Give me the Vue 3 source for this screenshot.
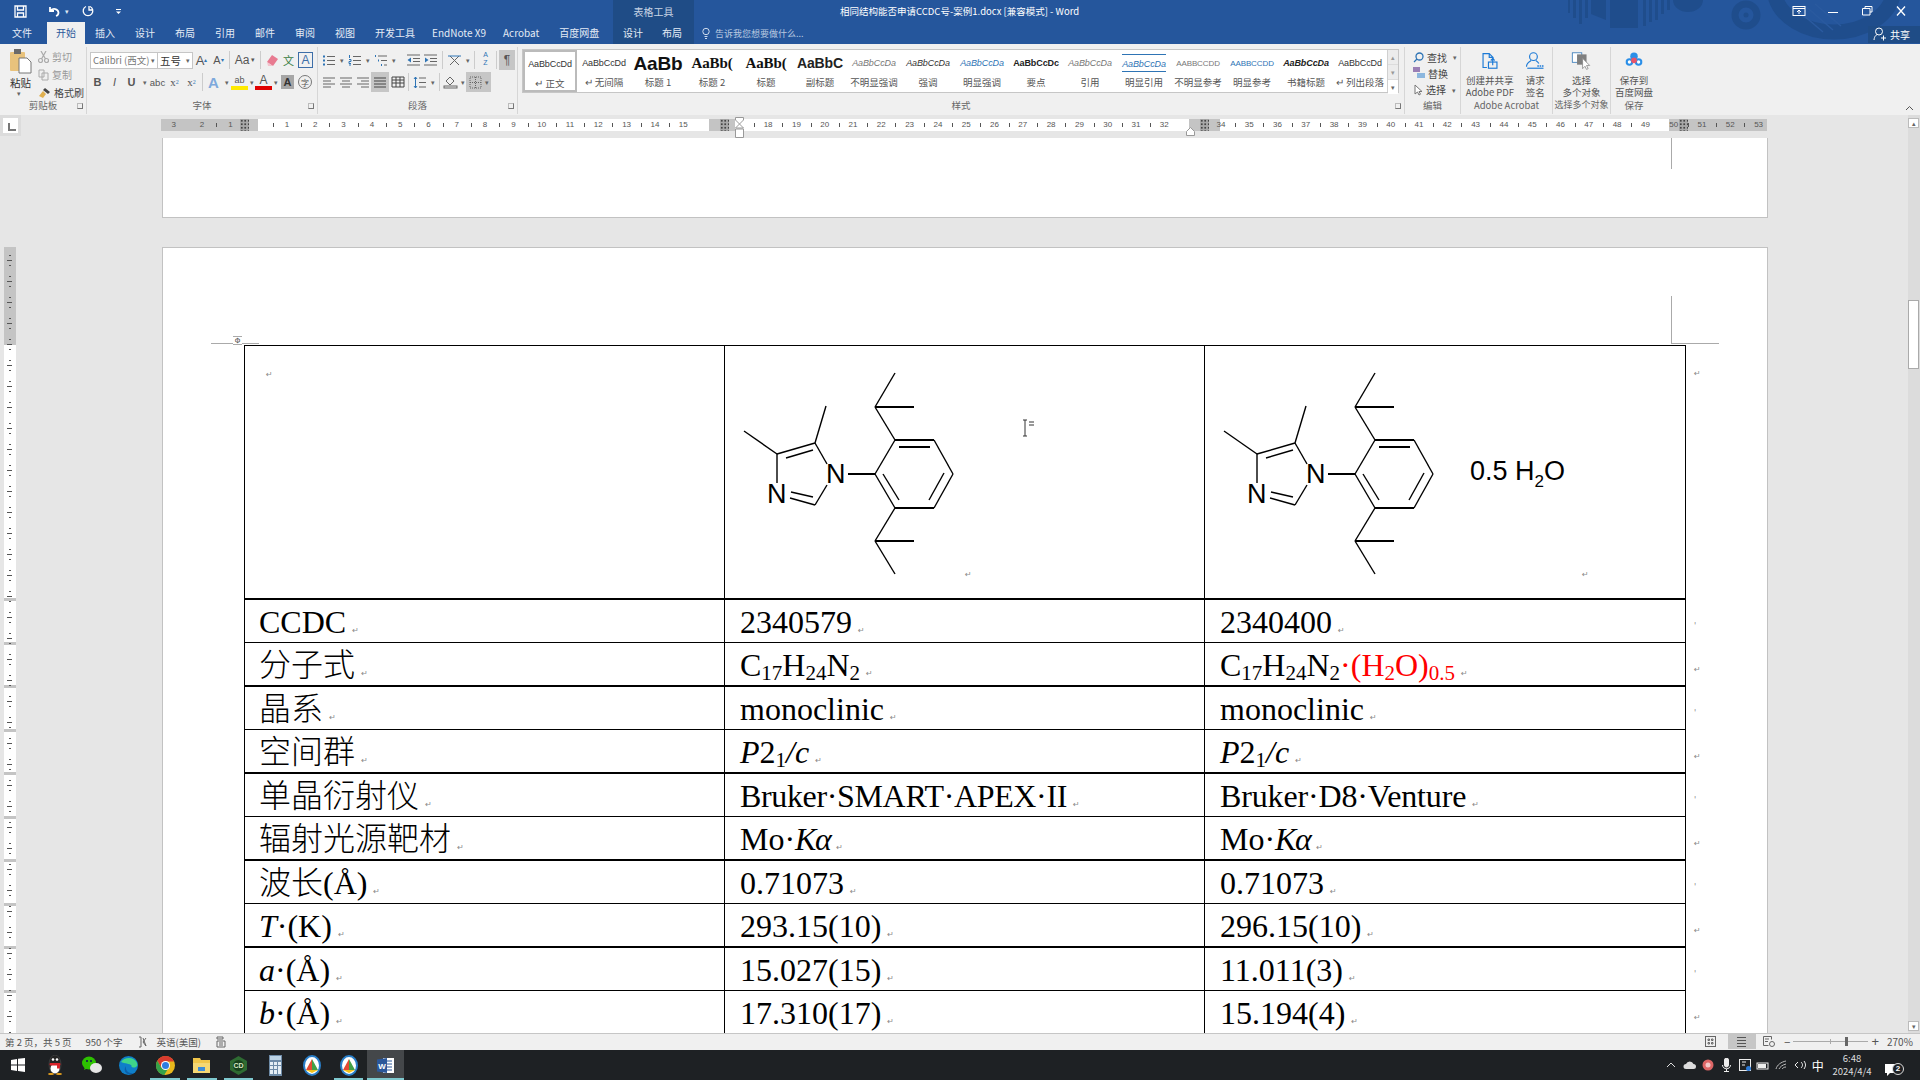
<template>
  <div class="word">
    <!-- title bar + tabs -->
    <header class="top">
      <svg class="deco" viewBox="0 0 340 44" width="340" height="44">
        <g fill="#1f4d8c">
          <rect v-for="s in decoStripes" :key="s[0]" :x="s[0]" y="0" :width="s[1]" :height="s[2]" />
          <path d="M28 0h15v20l-15-6zM47 0h28v28H47zM110 0h30a15 12 0 0 1-30 0z" />
        </g>
        <circle cx="183" cy="15" r="11" fill="none" stroke="#1f4d8c" stroke-width="7" />
        <circle cx="183" cy="15" r="2.5" fill="#1f4d8c" />
        <path d="M212 -4a60 44 0 0 0 118 0" fill="none" stroke="#1f4d8c" stroke-width="15" />
        <path d="M232 8l28 24M240 4l30 26M252 4l26 22" stroke="#2a5a9f" stroke-width="1.5" />
      </svg>

      <div class="top-left">
        <div class="qat">
          <svg class="q-save" width="13" height="13" viewBox="0 0 13 13" fill="none" stroke="#fff" stroke-width="1.3"><path d="M1 1h11v11H1zM3.5 1v4h6V1M3.5 12V8h6v4" /></svg>
          <svg class="q-undo" width="14" height="13" viewBox="0 0 14 13" fill="none" stroke="#fff" stroke-width="1.8"><path d="M3 2v4h4M3.5 5.5C6 3 11 3.500 11.500 7.500 11.500 9 10.500 10.500 9 11" /></svg>
          <span class="q-car">▾</span>
          <svg class="q-redo" width="13" height="13" viewBox="0 0 13 13" fill="none" stroke="#fff" stroke-width="1.3"><path d="M8 1.500a4.800 4.800 0 1 1-4 0M7 1v4h3" /></svg>
          <svg class="q-more" width="7" height="7" viewBox="0 0 7 7" fill="#fff"><rect x="1" y="1" width="5" height="1" /><path d="M1 3.500h5L3.500 6z" /></svg>
        </div>
        <nav class="tabs">
          <span v-for="t in tabs" :key="t" class="tab" :class="{ on: t === '开始', file: t === '文件', endnote: t === 'EndNote X9' }">{{ t }}</span>
        </nav>
      </div>

      <div class="top-ctx">
        <div class="ctx-title">表格工具</div>
        <nav class="tabs"><span class="tab ctx">设计</span><span class="tab ctx">布局</span></nav>
      </div>

      <div class="top-right">
        <div class="title-row">
          <span class="doc-title">相同结构能否申请CCDC号-案例1.docx [兼容模式] - Word</span>
          <div class="winbtns">
            <svg width="14" height="12" viewBox="0 0 14 12" fill="none" stroke="#fff"><rect x="1" y="1.500" width="12" height="9" /><path d="M1 3.500h12M7 9V5.500M5 7l2-2 2 2" /></svg>
            <svg width="14" height="12" viewBox="0 0 14 12" stroke="#fff"><path d="M2 7.500h10" /></svg>
            <svg width="14" height="12" viewBox="0 0 14 12" fill="none" stroke="#fff"><path d="M5 3V1.500h7V7h-2M2.500 3.500h7.500v6.500H2.500z" /></svg>
            <svg width="14" height="12" viewBox="0 0 14 12" stroke="#fff" stroke-width="1.300"><path d="M3 1.500l8 9M11 1.500l-8 9" /></svg>
          </div>
        </div>
        <div class="search-row">
          <svg width="8" height="13" viewBox="0 0 8 13" fill="none" stroke="#cfdcee"><circle cx="4" cy="4.500" r="3.200" /><path d="M2.500 9.500h3M3 11.500h2" /></svg>
          <span class="tell">告诉我您想要做什么...</span>
          <div class="share">
            <svg width="14" height="14" viewBox="0 0 14 14" fill="none" stroke="#fff"><circle cx="6" cy="4.500" r="3.500" /><path d="M1 13c.5-4 2-5 3.500-5.500M8 11h5M10.500 8.500v5" /></svg>
            <span>共享</span>
          </div>
        </div>
      </div>
    </header>

    <!-- ribbon -->
    <section class="ribbon">
      <div class="group g-clip">
        <div class="g-body clip">
          <div class="paste">
            <svg width="22" height="25" viewBox="0 0 22 25">
              <rect x="0" y="3" width="15" height="19" rx="1" fill="#e8c27c" />
              <rect x="4" y="0" width="7" height="5" fill="#6a6a6a" />
              <path d="M9 9h8l4 4v11H9z" fill="#fff" stroke="#777" />
            </svg>
            <span class="paste-t">粘贴</span>
            <span class="car">▾</span>
          </div>
          <div class="clip-list">
            <div class="mini dim">
              <svg width="11" height="12" viewBox="0 0 11 12" fill="none" stroke="#aaa" stroke-width="1.200"><circle cx="2.500" cy="9.500" r="2" /><circle cx="8.500" cy="9.500" r="2" /><path d="M3.500 8L8 0M7.500 8L3 0" /></svg>
              <span>剪切</span>
            </div>
            <div class="mini dim">
              <svg width="11" height="12" viewBox="0 0 11 12" fill="none" stroke="#aaa"><path d="M1 1h5v7H1zM4 4h6v7H4z" /></svg>
              <span>复制</span>
            </div>
            <div class="mini">
              <svg width="13" height="12" viewBox="0 0 13 12"><path d="M7 1l5 4-2 2-5-4z" fill="#444" /><path d="M5 4l3 3-3 4-4-2z" fill="#e0b050" /></svg>
              <span>格式刷</span>
            </div>
          </div>
        </div>
        <div class="g-label">剪贴板<i class="launch"></i></div>
      </div>

      <div class="group g-font">
        <div class="g-body rows">
          <div class="row1">
            <span class="combo font-box">Calibri (西文)<b>▾</b></span>
            <span class="combo size-box">五号<b>▾</b></span>
            <span class="ib grow">A<sup>▴</sup></span>
            <span class="ib shrink">A<sup>▾</sup></span>
            <i class="sep"></i>
            <span class="ib aa">Aa<b>▾</b></span>
            <i class="sep"></i>
            <span class="ib">
              <svg width="15" height="13" viewBox="0 0 15 13"><path d="M8 1l6 4-5 7-6-4z" fill="#e87a90" /><path d="M3 8l6 4H4z" fill="#f3c3cd" /></svg>
            </span>
            <span class="ib wen">文</span>
            <span class="ib boxed">A</span>
          </div>
          <div class="row2">
            <span class="ib fmt b">B</span>
            <span class="ib fmt i">I</span>
            <span class="ib fmt u">U</span>
            <span class="car">▾</span>
            <span class="ib fmt abc">abc</span>
            <span class="ib fmt">x<sub>2</sub></span>
            <span class="ib fmt">x<sup>2</sup></span>
            <i class="sep"></i>
            <span class="ib glow">A</span>
            <span class="car">▾</span>
            <span class="ib hl">ab</span>
            <span class="car tight">▾</span>
            <span class="ib fc">A</span>
            <span class="car tight">▾</span>
            <span class="ib shade">A</span>
            <span class="ib circle">字</span>
          </div>
        </div>
        <div class="g-label">字体<i class="launch"></i></div>
      </div>

      <div class="group g-para">
        <div class="g-body rows">
          <div class="row1">
            <span class="ib"><svg width="14" height="13" viewBox="0 0 14 13" stroke="#666"><path d="M5 2.500h8M5 6.500h8M5 10.500h8" /><path d="M1 2.500h2M1 6.500h2M1 10.500h2" stroke="#2e74b5" stroke-width="2" /></svg></span>
            <span class="car">▾</span>
            <span class="ib"><svg width="14" height="13" viewBox="0 0 14 13" stroke="#666"><path d="M5 2.500h8M5 6.500h8M5 10.500h8" /><path d="M1.500 1v3M1 5.500h2v2H1v2h2M1 11h2" stroke="#2e74b5" fill="none" /></svg></span>
            <span class="car">▾</span>
            <span class="ib"><svg width="14" height="13" viewBox="0 0 14 13" stroke="#666"><path d="M4 2h9M7 6.500h6M10 11h3" /><path d="M1.500 1v2M4.500 5.500v2M7.500 10v2" stroke="#2e74b5" /></svg></span>
            <span class="car">▾</span>
            <span class="ib outdent"><svg width="15" height="12" viewBox="0 0 15 12" stroke="#666"><path d="M1 1h13M7 4.500h7M7 7.500h7M1 11h13" /><path d="M5 3.500L1.500 6 5 8.500z" fill="#2e74b5" stroke="none" /></svg></span>
            <span class="ib"><svg width="15" height="12" viewBox="0 0 15 12" stroke="#666"><path d="M1 1h13M7 4.500h7M7 7.500h7M1 11h13" /><path d="M2 3.500L5.500 6 2 8.500z" fill="#2e74b5" stroke="none" /></svg></span>
            <i class="sep"></i>
            <span class="ib"><svg width="15" height="13" viewBox="0 0 15 13" fill="none" stroke="#666"><path d="M3 2l9 9M12 2l-9 9" /><path d="M1 2h13" stroke="#2e74b5" /></svg></span>
            <span class="car">▾</span>
            <i class="sep narrow"></i>
            <span class="ib az">A<br />Z</span>
            <i class="sep narrow"></i>
            <span class="ib pil">¶</span>
          </div>
          <div class="row2 aligns">
            <span class="ib"><svg width="14" height="11" viewBox="0 0 14 11" stroke="#666"><path d="M1 1h12M1 4h8M1 7h12M1 10h8" /></svg></span>
            <span class="ib"><svg width="14" height="11" viewBox="0 0 14 11" stroke="#666"><path d="M1 1h12M3 4h8M1 7h12M3 10h8" /></svg></span>
            <span class="ib"><svg width="14" height="11" viewBox="0 0 14 11" stroke="#666"><path d="M1 1h12M5 4h8M1 7h12M5 10h8" /></svg></span>
            <span class="ib sel"><svg width="14" height="11" viewBox="0 0 14 11" stroke="#444"><path d="M1 1h12M1 4h12M1 7h12M1 10h12" /></svg></span>
            <span class="ib"><svg width="14" height="12" viewBox="0 0 14 12" stroke="#444"><path d="M1 1h12M1 4h12M1 7h12M1 11h12M1 1v10M5 1v10M9 1v10M13 1v10" fill="none" /></svg></span>
            <i class="sep narrow"></i>
            <span class="ib"><svg width="14" height="13" viewBox="0 0 14 13" stroke="#666"><path d="M6 2h7M6 6.500h7M6 11h7" /><path d="M2.500 1v11M1 3l1.500-2L4 3M1 10l1.500 2L4 10" stroke="#2e74b5" fill="none" /></svg></span>
            <span class="car">▾</span>
            <i class="sep narrow"></i>
            <span class="ib"><svg width="15" height="14" viewBox="0 0 15 14" fill="none" stroke="#666"><path d="M3 6l4-4 4 4-4 4z" /><rect x="1" y="11" width="13" height="2" fill="#eee" /></svg></span>
            <span class="car tight">▾</span>
            <span class="bord-sel"><svg width="13" height="13" viewBox="0 0 13 13" stroke="#666" stroke-dasharray="1 1" fill="none"><rect x="1" y="1" width="11" height="11" /><path d="M1 6.500h11M6.500 1v11" /></svg><span class="car">▾</span></span>
          </div>
        </div>
        <div class="g-label">段落<i class="launch"></i></div>
      </div>

      <div class="group g-styles">
        <div class="g-body">
          <div class="gallery">
            <div class="gal-items">
              <div v-for="(s, i) in styles" :key="i" class="gal" :class="{ first: i === 0 }">
                <span class="sample" :class="s.c">{{ s.s }}</span>
                <span class="gal-name">{{ s.n }}</span>
              </div>
            </div>
            <div class="gal-scroll">
              <span>▴</span><span>▾</span><span class="more">▾</span>
            </div>
          </div>
        </div>
        <div class="g-label">样式<i class="launch"></i></div>
      </div>

      <div class="group g-edit">
        <div class="g-body edit">
          <div class="mini"><svg width="11" height="11" viewBox="0 0 11 11" fill="none" stroke="#2e74b5" stroke-width="1.300"><circle cx="6.500" cy="4.500" r="3.500" /><path d="M4 7L1 10" /></svg><span>查找</span><span class="car">▾</span></div>
          <div class="mini"><svg width="12" height="12" viewBox="0 0 12 12"><rect x="0" y="0" width="7" height="5" fill="#9a7fb5" /><rect x="4" y="6" width="8" height="5" fill="#8cb7de" /></svg><span>替换</span></div>
          <div class="mini"><svg width="10" height="12" viewBox="0 0 10 12" fill="#fff" stroke="#777"><path d="M2 1v9l2.500-2 1.500 3 1.500-.8L6 7.500h3z" /></svg><span>选择</span><span class="car">▾</span></div>
        </div>
        <div class="g-label">编辑</div>
      </div>

      <div class="group g-acro">
        <div class="g-body big-row">
          <div class="big">
            <svg width="22" height="22" viewBox="0 0 22 22" fill="none" stroke="#1c7ad6" stroke-width="1.500"><path d="M7 20H2V2h8l5 5v3M10 2v5h5" /><rect x="9" y="13" width="11" height="8" /><path d="M14.500 17V9M12 11l2.500-2.500L17 11" /></svg>
            <span>创建并共享<br />Adobe PDF</span>
          </div>
          <div class="big">
            <svg width="24" height="22" viewBox="0 0 24 22" fill="none" stroke="#1c7ad6" stroke-width="1.500"><circle cx="10" cy="6" r="5" /><path d="M1 19c0-5 3-6 6-8M13 11c2 1 3 2 4 4" /><path d="M2 21h21" /><path d="M15 18h8" stroke-dasharray="2 1" stroke-width="2" /></svg>
            <span>请求<br />签名</span>
          </div>
        </div>
        <div class="g-label">Adobe Acrobat</div>
      </div>

      <div class="group g-pick">
        <div class="g-body big-row">
          <div class="big">
            <svg width="24" height="24" viewBox="0 0 24 24"><rect x="1" y="1" width="12" height="12" fill="#fff" stroke="#2e74b5" /><rect x="7" y="3" width="12" height="13" fill="#7f7f7f" /><path d="M14 8v13l3-3 2 4 2-1-2-4h4z" fill="#fff" stroke="#888" /></svg>
            <span>选择<br />多个对象</span>
          </div>
        </div>
        <div class="g-label">选择多个对象</div>
      </div>

      <div class="group g-save">
        <div class="g-body big-row">
          <div class="big">
            <svg width="22" height="20" viewBox="0 0 20 18"><circle cx="10" cy="5" r="4.500" fill="#2b8fe8" /><circle cx="4.500" cy="12" r="4.500" fill="#2b8fe8" /><circle cx="15.500" cy="12" r="4.500" fill="#2b8fe8" /><circle cx="10" cy="10" r="3.500" fill="#e8546a" /><circle cx="4.500" cy="12" r="2" fill="#fff" /><circle cx="15.500" cy="12" r="2" fill="#fff" /></svg>
            <span>保存到<br />百度网盘</span>
          </div>
        </div>
        <div class="g-label">保存</div>
        <svg class="collapse" width="9" height="6" viewBox="0 0 9 6" fill="none" stroke="#555"><path d="M1 5l3.500-3.500L8 5" /></svg>
      </div>
    </section>

    <!-- ruler + document + scrollbar -->
    <div class="work">
      <div class="main">
        <div class="ruler-row">
          <span class="tab-stop"><b></b></span>
          <div class="hruler">
            <i v-for="g in rulerGray" :key="g[0]" class="r-gray" :style="{ left: g[0] + 'px', width: g[1] + 'px' }"></i>
            <span v-for="n in rulerNums" :key="n.x" class="r-num" :style="{ left: n.x + 'px' }">{{ n.t }}</span>
            <i v-for="x in rulerTicks" :key="x" class="r-tick" :style="{ left: x + 'px' }"></i>
            <i v-for="x in rulerCols" :key="x" class="r-col" :style="{ left: x + 'px' }"></i>
            <svg class="r-hour" width="9" height="21" viewBox="0 0 9 21" fill="#fff" stroke="#999"><path d="M.5.500h8V3L4.500 7 .5 3zM4.500 7l4 4H.5zM.5 12h8v8.500h-8z" /></svg>
            <svg class="r-tri" width="9" height="9" viewBox="0 0 9 9" fill="#fff" stroke="#999"><path d="M4.500.500l4 4v4h-8v-4z" /></svg>
          </div>
        </div>

        <div class="doc">
          <aside class="gutter">
            <div class="vruler">
              <i class="v-gray"></i>
              <i v-for="b in vBands" :key="b" class="v-band" :style="{ top: b + 'px' }"></i>
              <i v-for="t in vTicks" :key="t.y" class="v-tick" :class="{ long: t.long }" :style="{ top: t.y + 'px' }"></i>
            </div>
          </aside>

          <div class="pages">
            <div class="page p1">
              <i class="crop crop-v1"></i>
            </div>
            <div class="page p2">
              <i class="crop crop-v2"></i>
              <i class="crop crop-h2"></i>
              <i class="crop crop-h3"></i>
              <span class="move-h">Φ</span>

              <div class="tbl">
                <div class="t-row head">
                  <div class="cell c1"><span class="pm top-pm">↵</span></div>
                  <div v-for="(m, mi) in [0, 1]" :key="m" class="cell mol" :class="mi === 0 ? 'c2' : 'c3'">
                    <svg class="mol-svg" viewBox="0 0 480 252" width="480" height="252">
                      <g stroke="#000" fill="none" stroke-width="1.400">
                        <line v-for="(l, i) in molLines" :key="i" :x1="l[0]" :y1="l[1]" :x2="l[2]" :y2="l[3]" :stroke-width="l[4] || 1.4" />
                      </g>
                      <text x="101" y="137" class="atom">N</text>
                      <text x="42" y="157" class="atom">N</text>
                      <text v-if="mi === 1" x="265" y="134" class="water">0.5 H<tspan dy="7" font-size="17">2</tspan><tspan dy="-7">O</tspan></text>
                      <text :x="mi === 0 ? 240 : 377" y="231" class="svg-pm">↵</text>
                      <g v-if="mi === 0" stroke="#333" fill="none">
                        <path d="M298 74h4M298 90h4M300 74v16" />
                        <path d="M304 76h5M304 79h5" />
                      </g>
                    </svg>
                  </div>
                  <div class="end first-end">↵</div>
                </div>

                <div v-for="(r, i) in rows" :key="i" class="t-row" :class="{ thick: i % 2 === 1 }">
                  <div class="cell txt c1">
                    <span v-for="(p, k) in r[0]" :key="k" :class="p.c">{{ p.t }}</span><span class="pm">↵</span>
                  </div>
                  <div class="cell txt c2">
                    <span v-for="(p, k) in r[1]" :key="k" :class="p.c">{{ p.t }}</span><span class="pm">↵</span>
                  </div>
                  <div class="cell txt c3">
                    <span v-for="(p, k) in r[2]" :key="k" :class="p.c">{{ p.t }}</span><span class="pm">↵</span>
                  </div>
                  <div class="end">{{ i % 2 === 1 ? '↵' : '\'' }}</div>
                </div>
              </div>
            </div>
          </div>
        </div>
      </div>

      <div class="vscroll">
        <span class="vs-btn">▴</span>
        <span class="vs-thumb"></span>
        <span class="vs-btn down">▾</span>
      </div>
    </div>

    <!-- status bar -->
    <footer class="status">
      <span class="st-page">第 2 页，共 5 页</span>
      <span class="st-words">950 个字</span>
      <svg class="st-ic1" width="9" height="12" viewBox="0 0 9 12" fill="none" stroke="#666"><path d="M1 1h2v10H1M8 2L5 6l3 4M5 2l3 8" /></svg>
      <span class="st-lang">英语(美国)</span>
      <svg class="st-ic2" width="10" height="12" viewBox="0 0 10 12" fill="none" stroke="#666"><path d="M1 1h6v2H1zM1 5h8v6H1zM3 7h4M3 9h4" /></svg>
      <div class="st-right">
        <svg width="11" height="11" viewBox="0 0 11 11" fill="none" stroke="#666"><rect x=".5" y=".5" width="10" height="10" /><path d="M3 3h1.500v1.500H3zM6.500 3H8v1.500H6.500zM3 6.500h1.500V8H3zM6.500 6.500H8V8H6.500z" /></svg>
        <span class="view-on"><svg width="11" height="10" viewBox="0 0 11 10" stroke="#555"><path d="M1 .5h9M1 3.500h9M1 6.500h9M1 9.500h9" /></svg></span>
        <svg width="12" height="11" viewBox="0 0 12 11" fill="none" stroke="#666"><path d="M.5.500h8v3M.5.500v9h5M2 3h4M2 5.500h3" /><circle cx="9" cy="8" r="2.500" /></svg>
        <span class="zoom-m">−</span>
        <span class="slider"><i></i><b></b></span>
        <span class="zoom-p">+</span>
        <span class="zoom-v">270%</span>
      </div>
    </footer>

    <!-- taskbar -->
    <div class="taskbar">
      <div class="t-apps">
        <span class="t-app"><svg width="14" height="14" viewBox="0 0 14 14" fill="#fff"><path d="M0 2l6-1v5.500H0zM7 .8L14 0v6.500H7zM0 7.500h6V13l-6-1zM7 7.500h7V14l-7-1z" /></svg></span>
        <span class="t-app"><svg width="16" height="20" viewBox="0 0 16 20"><ellipse cx="8" cy="9.500" rx="6" ry="9.500" fill="#222" stroke="#555" stroke-width=".5" /><ellipse cx="8" cy="13.500" rx="4.500" ry="5" fill="#fff" /><circle cx="6" cy="4.500" r="1.300" fill="#fff" /><circle cx="10" cy="4.500" r="1.300" fill="#fff" /><rect x="2.500" y="8" width="11" height="2.500" rx="1" fill="#d8232a" /><path d="M10 9.500h3v4h-3z" fill="#d8232a" /><ellipse cx="4" cy="19" rx="3" ry="1" fill="#f1a81d" /><ellipse cx="12" cy="19" rx="3" ry="1" fill="#f1a81d" /></svg></span>
        <span class="t-app"><svg width="20" height="18" viewBox="0 0 20 18"><ellipse cx="7" cy="7" rx="7" ry="6.500" fill="#2dc100" /><path d="M3 11l-1 3 4-2z" fill="#2dc100" /><ellipse cx="14" cy="12" rx="6" ry="5" fill="#e6e6e6" /><circle cx="5" cy="5" r="1" fill="#115" /><circle cx="9" cy="5" r="1" fill="#115" /></svg></span>
        <span class="t-app"><svg width="19" height="19" viewBox="0 0 19 19"><circle cx="9.500" cy="9.500" r="9.500" fill="#0f7fc9" /><path d="M2 6c3-5 13-6 16 1 1 3-1 5-4 4.500-1-.2-2-1-1.500-2-2-2-7-2-10.500-3.500z" fill="#3fd58a" /><path d="M7 10c-1 4 2 8 8 7-6 4-12-2-8-7z" fill="#0c5fa8" /></svg></span>
        <span class="t-app on"><svg width="19" height="19" viewBox="0 0 19 19"><circle cx="9.500" cy="9.500" r="9.500" fill="#e8b81c" /><path d="M9.500 0a9.500 9.500 0 0 0-8.200 4.700L5.500 12 9.500 5.500H18A9.500 9.500 0 0 0 9.500 0z" fill="#d93b2f" /><path d="M1.300 4.700a9.500 9.500 0 0 0 6.900 14.200L12.500 12 5.500 12z" fill="#35a24a" /><circle cx="9.500" cy="9.500" r="4.500" fill="#fff" /><circle cx="9.500" cy="9.500" r="3.500" fill="#2f7de1" /></svg></span>
        <span class="t-app on"><svg width="17" height="15" viewBox="0 0 17 15"><path d="M0 0h7l1 2h9v13H0z" fill="#f1c64a" /><rect x="0" y="5" width="17" height="10" fill="#f6d873" /><rect x="5" y="9" width="7" height="4" fill="#3e8dd8" /></svg></span>
        <span class="t-app on"><svg width="17" height="19" viewBox="0 0 17 19"><path d="M8.500 0L17 5v9l-8.500 5L0 14V5z" fill="#2e6b32" /><circle cx="8.500" cy="9.500" r="5.500" fill="#18421c" /><text x="8.500" y="12" class="cd">CD</text></svg></span>
        <span class="t-app"><svg width="13" height="21" viewBox="0 0 13 21"><rect width="13" height="21" fill="#6d8aa6" /><rect x="1" y="1" width="11" height="4" fill="#bcd3e6" /><path d="M1 7h3v3H1zM5 7h3v3H5zM9 7h3v3H9zM1 11h3v3H1zM5 11h3v3H5zM9 11h3v8H9zM1 15h3v4H1zM5 15h3v4H5z" fill="#e4edf4" /></svg></span>
        <span class="t-app"><svg width="18" height="21" viewBox="0 0 18 21"><ellipse cx="9" cy="10.500" rx="8" ry="9.500" fill="#fff" stroke="#2a7fc9" stroke-width="2" /><path d="M9 4L3 15h6z" fill="#e34a34" /><path d="M9 4l6 11H9z" fill="#43a047" /><path d="M3 15h12l-6 3z" fill="#f1c21e" /></svg></span>
        <span class="t-app on"><svg width="18" height="21" viewBox="0 0 18 21"><ellipse cx="9" cy="10.500" rx="8" ry="9.500" fill="#fff" stroke="#2a7fc9" stroke-width="2" /><path d="M9 4L3 15h6z" fill="#e34a34" /><path d="M9 4l6 11H9z" fill="#43a047" /><path d="M3 15h12l-6 3z" fill="#f1c21e" /></svg></span>
        <span class="t-app on word-app"><svg width="17" height="17" viewBox="0 0 17 17"><path d="M6 1h11v15H6z" fill="#fff" /><path d="M9 4h6M9 7h6M9 10h6M9 13h6" stroke="#2b579a" /><path d="M0 2.500L10 1v15L0 14.500z" fill="#2b579a" /><text x="5" y="11.500" class="w">W</text></svg></span>
      </div>
      <div class="tray">
        <span class="tr"><svg width="10" height="6" viewBox="0 0 10 6" fill="none" stroke="#ddd"><path d="M1 5l4-4 4 4" /></svg></span>
        <span class="tr"><svg width="13" height="8" viewBox="0 0 13 8" fill="#ddd"><path d="M3 8a2.500 2.500 0 0 1 0-5 4 4 0 0 1 7.500 0 2.500 2.500 0 0 1 0 5z" /></svg></span>
        <span class="tr"><svg width="12" height="12" viewBox="0 0 12 12"><circle cx="6" cy="6" r="5.500" fill="#d66" /><circle cx="6" cy="6" r="2.500" fill="#f3c9c9" /></svg></span>
        <span class="tr"><svg width="9" height="14" viewBox="0 0 9 14" fill="none" stroke="#eee"><rect x="2.500" y="0" width="4" height="9" rx="2" fill="#eee" /><path d="M.5 7c0 5 8 5 8 0M4.500 11v3M2 13.500h5" /></svg></span>
        <span class="tr"><svg width="12" height="12" viewBox="0 0 12 12"><rect x=".5" y=".5" width="11" height="11" fill="none" stroke="#eee" /><path d="M3 3h4M3 6h3" stroke="#eee" /><circle cx="9.500" cy="9.500" r="2.500" fill="#2a79d6" /></svg></span>
        <span class="tr"><svg width="13" height="9" viewBox="0 0 13 9" fill="#eee"><rect x="1" y="2" width="11" height="6" fill="none" stroke="#eee" /><rect x="2" y="3" width="8" height="4" /></svg></span>
        <span class="tr"><svg width="12" height="10" viewBox="0 0 12 10" fill="none" stroke="#bbb"><path d="M1 9c1-4 5-7 10-8M4 9c1-2 3-4 7-5M7 9c1-1 2-2 4-2" /></svg></span>
        <span class="tr"><svg width="12" height="10" viewBox="0 0 12 10" fill="none" stroke="#eee"><path d="M4 2L1 5l3 3M7 2c2 2 2 4 0 6M10 1c2 3 2 5 0 8" /></svg></span>
        <span class="tr ime">中</span>
        <div class="clock"><span>6:48</span><span>2024/4/4</span></div>
        <div class="notify">
          <svg width="13" height="12" viewBox="0 0 13 12" fill="#fff"><path d="M0 0h13v9H5L2 12V9H0z" /></svg>
          <b>2</b>
        </div>
      </div>
    </div>
  </div>
</template>

<script setup>
const t = (text, c = '') => ({ t: text, c })
const s = (text) => t(text, 'sub')
const it = (text) => t(text, 'it')

const tabs = ['文件', '开始', '插入', '设计', '布局', '引用', '邮件', '审阅', '视图', '开发工具', 'EndNote X9', 'Acrobat', '百度网盘']

const styles = [
  { s: 'AaBbCcDd', n: '↵ 正文', c: '' },
  { s: 'AaBbCcDd', n: '↵ 无间隔', c: '' },
  { s: 'AaBb', n: '标题 1', c: 'h1' },
  { s: 'AaBb(', n: '标题 2', c: 'h2' },
  { s: 'AaBb(', n: '标题', c: 'h2' },
  { s: 'AaBbC', n: '副标题', c: 'h3' },
  { s: 'AaBbCcDa', n: '不明显强调', c: 'em gr' },
  { s: 'AaBbCcDa', n: '强调', c: 'em' },
  { s: 'AaBbCcDa', n: '明显强调', c: 'em bl' },
  { s: 'AaBbCcDc', n: '要点', c: 'bd' },
  { s: 'AaBbCcDa', n: '引用', c: 'em gr' },
  { s: 'AaBbCcDa', n: '明显引用', c: 'em bl lines' },
  { s: 'AABBCCDD', n: '不明显参考', c: 'gr caps' },
  { s: 'AABBCCDD', n: '明显参考', c: 'bl caps' },
  { s: 'AaBbCcDa', n: '书籍标题', c: 'em bd' },
  { s: 'AaBbCcDd', n: '↵ 列出段落', c: '' },
]

const rows = [
  [[t('CCDC')], [t('2340579')], [t('2340400')]],
  [[t('分子式')], [t('C'), s('17'), t('H'), s('24'), t('N'), s('2')],
    [t('C'), s('17'), t('H'), s('24'), t('N'), s('2'), t('·(H', 'red'), t('2', 'sub red'), t('O)', 'red'), t('0.5', 'sub red')]],
  [[t('晶系')], [t('monoclinic')], [t('monoclinic')]],
  [[t('空间群')], [it('P'), t('2'), s('1'), it('/c')], [it('P'), t('2'), s('1'), it('/c')]],
  [[t('单晶衍射仪')], [t('Bruker·SMART·APEX·II', 'tight-a')], [t('Bruker·D8·Venture', 'tight-b')]],
  [[t('辐射光源靶材')], [t('Mo·'), t('Kα', 'it tight-c')], [t('Mo·'), t('Kα', 'it tight-c')]],
  [[t('波长(Å)')], [t('0.71073')], [t('0.71073')]],
  [[it('T'), t('·(K)')], [t('293.15(10)')], [t('296.15(10)')]],
  [[it('a'), t('·(Å)')], [t('15.027(15)')], [t('11.011(3)')]],
  [[it('b'), t('·(Å)')], [t('17.310(17)')], [t('15.194(4)')]],
]

// molecule drawn relative to the cell
const molLines = [
  [170, 27, 150, 61], [150, 61, 189, 61, 2], [150, 61, 170, 94],
  [170, 94, 209, 94, 2], [209, 94, 228, 128], [228, 128, 209, 162], [209, 162, 170, 162, 2], [170, 162, 150, 128], [150, 128, 170, 94],
  [174, 101, 205, 101, 2], [158, 128, 174, 154], [219, 127, 204, 154],
  [170, 162, 150, 195], [150, 195, 170, 228], [150, 195, 189, 195, 2],
  [123, 128, 150, 128, 2],
  [102, 118, 90, 97], [90, 97, 52, 108], [61, 112, 88, 104],
  [52, 108, 52, 137], [52, 108, 19, 85], [90, 97, 101, 60],
  [65, 152, 90, 159], [66, 146, 88, 151], [90, 159, 102, 139],
]

const RULER_X0 = 161
const rulerX = (n) => 258.7 + 28.3 * n - RULER_X0
const rulerGray = [[0, 97], [548, 26], [1028, 31], [1508, 98]]
const hidden = [0, 16, 17, 33]
const rulerNums = []
for (let n = -3; n <= 53; n++) {
  if (hidden.includes(n)) continue
  rulerNums.push({ t: String(Math.abs(n)), x: rulerX(n) })
}
const skipTicks = [-0.5, 15.5, 16.5, 32.5, 49.5]
const rulerTicks = []
for (let n = -1.5; n <= 53; n++) {
  if (skipTicks.includes(n)) continue
  rulerTicks.push(rulerX(n))
}
const rulerCols = [83, 563, 1043, 1522]

const decoStripes = [[5, 2, 13], [10, 3, 18], [16, 3, 24], [22, 3, 18], [80, 3, 26], [86, 3, 22], [92, 3, 20], [98, 3, 14], [104, 3, 10]]

// left ruler, y is measured from its top (page two's top edge)
const vTicks = []
for (let y = 13; y < 800; y += 21) {
  vTicks.push({ y, long: true })
  vTicks.push({ y: y + 5, long: false })
  vTicks.push({ y: y - 5, long: false })
}
const vBands = [351, 395, 438, 482, 525, 569, 612, 656, 699, 743]
</script>

<style>
html, body { margin: 0; padding: 0; background: #e6e6e6; }
</style>

<style scoped>
* { box-sizing: border-box; }

.word {
  width: 1920px;
  height: 1080px;
  display: flex;
  flex-direction: column;
  overflow: hidden;
  font-family: "Noto Sans CJK SC", "Liberation Sans", sans-serif;
  color: #444;
  background: #e6e6e6;
}

/* title bar */
.top {
  height: 44px;
  flex: none;
  display: flex;
  background: #25569c;
  position: relative;
  color: #fff;
}
.deco { position: absolute; left: 1563px; top: 0; }
.top-left { width: 613px; }
.qat { height: 22px; display: flex; align-items: center; padding-left: 14px; }
.q-undo { margin-left: 20px; }
.q-car { font-size: 7px; margin-left: 4px; color: #dfe7f2; }
.q-redo { margin-left: 13px; }
.q-more { margin-left: 20px; }
.tabs { height: 22px; display: flex; align-items: stretch; }
.tab {
  padding: 0 10px;
  font-size: 10px;
  line-height: 22px;
  color: #e4ebf5;
  white-space: nowrap;
}
.tab.file { width: 47px; padding-left: 12px; padding-right: 0; }
.tab.on { background: #f0f0f0; color: #2b579a; padding: 0 9px; }
.tab.endnote { padding: 0 7px; }
.tab.ctx { padding: 0 9px 0 10px; }
.top-ctx { width: 81px; background: #1f4c86; position: relative; }
.ctx-title { height: 22px; font-size: 10px; line-height: 24px; text-align: center; color: #c8d4e4; }
.top-right { flex: 1; position: relative; min-width: 0; }
.title-row { height: 22px; display: flex; align-items: center; padding-left: 146px; }
.doc-title { font-size: 9.500px; color: #fff; white-space: nowrap; }
.winbtns { margin-left: auto; display: flex; gap: 20px; padding-right: 12px; align-items: center; }
.search-row { height: 22px; display: flex; align-items: center; padding-left: 8px; }
.tell { font-size: 9px; color: #b9c9e0; margin-left: 5px; }
.share {
  margin-left: auto;
  width: 52px;
  height: 17px;
  margin-top: 2px;
  background: #1f4c86;
  display: flex;
  align-items: center;
  gap: 3px;
  padding-left: 5px;
  font-size: 10px;
}

/* ribbon */
.ribbon {
  height: 71px;
  flex: none;
  display: flex;
  background: #f0f0f0;
  font-size: 10px;
  padding-top: 3px;
}
.group {
  display: flex;
  flex-direction: column;
  position: relative;
  border-right: 1px solid #d6d6d6;
  margin-bottom: 1px;
}
.g-body { flex: 1; min-height: 0; }
.g-label {
  height: 16px;
  flex: none;
  position: relative;
  text-align: center;
  font-size: 9.500px;
  line-height: 14px;
  color: #666;
}
.launch {
  position: absolute;
  right: 3px;
  top: 5px;
  width: 6px;
  height: 6px;
  border-right: 1px solid #777;
  border-bottom: 1px solid #777;
  border-left: 1px solid #bbb;
  border-top: 1px solid #bbb;
}
.g-clip { width: 87px; }
.g-font { width: 231px; }
.g-para { width: 200px; }
.g-styles { width: 887px; }
.g-edit { width: 56px; }
.g-acro { width: 92px; }
.g-pick { width: 58px; }
.g-save { flex: 1; border-right: 0; padding-right: 263px; }
.collapse { position: absolute; right: 6px; bottom: 3px; }

.clip { display: flex; padding: 2px 0 0 10px; }
.paste { width: 28px; display: flex; flex-direction: column; align-items: flex-start; }
.paste-t { font-size: 10.500px; line-height: 13px; margin-top: 2px; color: #333; }
.paste .car { width: 18px; line-height: 9px; }
.clip-list { display: flex; flex-direction: column; gap: 3px; margin-top: 0; }
.mini { display: flex; align-items: center; gap: 3px; height: 15px; white-space: nowrap; font-size: 10px; color: #444; }
.mini.dim { color: #999; }
.car { font-size: 7px; color: #666; width: 9px; text-align: center; flex: none; }
.car.tight { width: 7px; }

.rows { padding-left: 2px; }
.row1, .row2 { display: flex; align-items: center; height: 20px; }
.row1 { margin-top: 3px; }
.row2 { margin-top: 2px; }
.g-font .row1 { padding-left: 1px; }
.combo {
  height: 17px;
  background: #fff;
  border: 1px solid #c6c6c6;
  font-size: 9.500px;
  line-height: 15px;
  padding-left: 2px;
  display: flex;
  justify-content: space-between;
  white-space: nowrap;
  overflow: hidden;
}
.combo b { font-weight: 400; font-size: 7px; color: #666; padding-right: 2px; }
.font-box { width: 68px; color: #777; }
.size-box { width: 35px; border-left: 0; font-size: 10.500px; color: #333; }
.ib {
  width: 17px;
  height: 18px;
  flex: none;
  display: flex;
  align-items: center;
  justify-content: center;
  font-family: "Liberation Sans", sans-serif;
  font-size: 11px;
  color: #555;
}
.grow { margin-left: 0; font-size: 13px; }
.grow sup, .shrink sup { font-size: 6px; color: #2e74b5; line-height: 0; }
.shrink { font-size: 11px; }
.sep { width: 1px; height: 18px; background: #ccc; margin: 0 3px; flex: none; }
.sep.narrow { margin: 0 2px; }
.g-font .sep { margin: 0 2px; }
.aa { width: 26px; font-size: 12px; }
.aa b { font-weight: 400; font-size: 7px; margin-left: 2px; }
.wen { font-family: "Noto Sans CJK SC", sans-serif; font-size: 11px; color: #3a7d44; }
.boxed { border: 1px solid #3d6ea8; color: #3d6ea8; height: 16px; width: 15px; margin-left: 1px; font-size: 12px; }
.fmt { font-family: "Liberation Serif", serif; font-size: 11px; }
.fmt.b { font-family: "Liberation Sans", sans-serif; font-weight: 700; color: #555; }
.fmt.i { font-style: italic; font-family: "Liberation Sans", sans-serif; }
.fmt.u { font-family: "Liberation Sans", sans-serif; font-weight: 700; }
.fmt.abc { font-family: "Liberation Sans", sans-serif; font-size: 9.500px; }
.fmt sub, .fmt sup { font-size: 6px; line-height: 0; color: #2e74b5; }
.glow { color: #7ea9dc; font-size: 15px; font-weight: 700; }
.hl { border-bottom: 4px solid #ffea00; height: 16px; font-size: 9px; width: 17px; }
.fc { border-bottom: 4px solid #e00000; height: 16px; font-size: 12px; }
.shade { background: #a6a6a6; height: 14px; width: 13px; margin: 0 2px; font-size: 11px; color: #333; font-weight: 700; }
.circle { border: 1px solid #777; border-radius: 50%; height: 14px; width: 14px; font-size: 8px; font-family: "Noto Sans CJK SC", sans-serif; margin-left: 2px; }

.outdent { margin-left: 7px; }
.az { font-size: 7px; line-height: 8px; display: block; text-align: center; color: #2e74b5; }
.pil { background: #c6c6c6; height: 20px; width: 16px; font-size: 12px; }
.aligns .sel { background: #c6c6c6; height: 20px; width: 18px; }
.bord-sel { display: flex; align-items: center; background: #c6c6c6; width: 25px; height: 20px; padding-left: 3px; flex: none; }

/* style gallery */
.gallery {
  margin: 2px 0 0 4px;
  width: 877px;
  height: 44px;
  display: flex;
  background: #fff;
  border: 1px solid #c6c6c6;
}
.gal-items { display: flex; width: 864px; overflow: hidden; }
.gal {
  width: 54px;
  flex: none;
  display: flex;
  flex-direction: column;
  align-items: center;
  overflow: hidden;
  white-space: nowrap;
  padding-top: 1px;
}
.gal.first { border: 2px solid #bbb; border-top-width: 2px; padding-top: 0; }
.sample {
  height: 25px;
  display: block;
  line-height: 25px;
  font-family: "Liberation Sans", sans-serif;
  font-size: 9px;
  color: #333;
  letter-spacing: -0.100px;
}
.gal-name { font-size: 9.500px; line-height: 14px; color: #555; margin-top: -1px; }
.sample.h1 { font-size: 19px; font-weight: 700; color: #111; }
.sample.h2 { font-size: 15px; font-weight: 700; font-family: "Liberation Serif", serif; color: #111; }
.sample.h3 { font-size: 14px; font-weight: 700; color: #222; }
.sample.em { font-style: italic; }
.sample.gr { color: #777; }
.sample.bl { color: #2e74b5; }
.sample.bd { font-weight: 700; color: #222; }
.sample.caps { font-size: 8px; }
.sample.lines { line-height: 18px; height: 18px; margin-top: 3px; margin-bottom: 4px; border-top: 1px solid #2e74b5; border-bottom: 1px solid #2e74b5; }
.gal-scroll {
  flex: 1;
  display: flex;
  flex-direction: column;
  background: #ececec;
  border-left: 1px solid #d0d0d0;
  font-size: 7px;
  color: #999;
  text-align: center;
}
.gal-scroll span { flex: 1; line-height: 14px; border-bottom: 1px solid #dcdcdc; }
.gal-scroll .more { background: #fff; color: #666; border-bottom: 0; }

/* editing / big buttons */
.edit { padding: 2px 0 0 8px; display: flex; flex-direction: column; gap: 0; }
.edit .mini { height: 17px; }
.big-row { display: flex; justify-content: space-around; padding-top: 5px; }
.big {
  display: flex;
  flex-direction: column;
  align-items: center;
  text-align: center;
  font-size: 9.500px;
  line-height: 12px;
  color: #555;
  white-space: nowrap;
}
.big svg { margin-bottom: 5px; }
.g-pick .big svg { margin-bottom: 3px; }
.g-pick .g-label { font-size: 9px; white-space: nowrap; }
.g-save .big svg { margin-bottom: 7px; }

/* work area */
.work { flex: 1; min-height: 0; display: flex; }
.main { flex: 1; min-width: 0; display: flex; flex-direction: column; }
.ruler-row { height: 20px; flex: none; display: flex; padding-left: 0; position: relative; }
.tab-stop {
  width: 21px;
  height: 21px;
  background: #dcdcdc;
  padding: 3px;
  flex: none;
}
.tab-stop b { display: block; width: 15px; height: 15px; background: #fff; position: relative; }
.tab-stop b::after {
  content: '';
  position: absolute;
  left: 5px;
  top: 5px;
  width: 6px;
  height: 6px;
  border-left: 2px solid #777;
  border-bottom: 2px solid #777;
}
.hruler {
  position: relative;
  margin: 4px 0 0 140px;
  width: 1606px;
  height: 12px;
  background: #fff;
  font-family: "Liberation Sans", sans-serif;
}
.r-gray { position: absolute; top: 0; height: 12px; background: #c4c4c4; }
.r-num { position: absolute; top: 1px; font-size: 8px; line-height: 10px; color: #555; transform: translateX(-50%); }
.r-tick { position: absolute; top: 4px; width: 1px; height: 4px; background: #555; }
.r-col {
  position: absolute;
  top: 0;
  width: 9px;
  height: 12px;
  transform: translateX(-4px);
  background-color: #a8a8a8;
  background-image: radial-gradient(#444 0.700px, transparent 0.900px);
  background-size: 3.500px 3.500px;
}
.r-hour { position: absolute; left: 574px; top: -2px; }
.r-tri { position: absolute; left: 1025px; top: 8px; }

.doc { flex: 1; min-height: 0; display: flex; overflow: hidden; }
.gutter { width: 162px; flex: none; padding: 112px 0 0 4px; }
.vruler { position: relative; width: 12px; height: 800px; background: #fff; }
.v-gray { position: absolute; left: 0; top: 0; width: 12px; height: 98px; background: #c4c4c4; }
.v-band { position: absolute; left: 0; width: 12px; height: 3px; background: #c4c4c4; }
.v-tick { position: absolute; left: 5px; width: 2px; height: 1px; background: #555; }
.v-tick.long { left: 3px; width: 5px; }

.pages { width: 1606px; padding-top: 3px; flex: none; display: flex; flex-direction: column; gap: 29px; }
.page {
  background: #fff;
  border: 1px solid #c2c2c2;
  position: relative;
  flex: none;
}
.p1 { height: 80px; border-top: 0; }
.p2 { height: 900px; padding: 97px 0 0 81px; }
.crop { position: absolute; background: #aaa; }
.crop-v1 { left: 1508px; top: 0; width: 1px; height: 31px; }
.crop-v2 { left: 1508px; top: 48px; width: 1px; height: 47px; }
.crop-h2 { left: 1508px; top: 95px; width: 48px; height: 1px; }
.crop-h3 { left: 48px; top: 95px; width: 48px; height: 1px; }
.move-h {
  position: absolute;
  left: 70px;
  top: 88px;
  width: 9px;
  height: 9px;
  background: #fff;
  border-top: 1px solid #aaa;
  border-bottom: 1px solid #aaa;
  font-size: 7px;
  line-height: 7px;
  text-align: center;
  color: #444;
}

/* table */
.tbl {
  font-family: "Liberation Serif", "Noto Sans CJK SC", serif;
  font-size: 32px;
  color: #000;
}
.t-row { display: flex; height: 43px; }
.t-row.thick { height: 44px; }
.t-row.head { height: 255px; }
.cell {
  border-bottom: 1px solid #000;
  flex: none;
  position: relative;
}
.thick .cell, .head .cell { border-bottom-width: 2px; }
.head .cell { border-top: 1px solid #000; }
.c1 { width: 480px; border-left: 1px solid #000; }
.c2 { width: 480px; border-left: 1px solid #000; }
.c3 { width: 482px; border-left: 1px solid #000; border-right: 1px solid #000; }
.txt { padding: 2px 0 0 15px; line-height: 41px; white-space: nowrap; overflow: visible; }
.c1.txt { padding-left: 14px; font-weight: 300; }
.it { font-style: italic; }
.sub { font-size: 21px; line-height: 0; vertical-align: -4px; }
.red { color: #ff0000; }
.tight-a { letter-spacing: -0.350px; }
.tight-b { letter-spacing: -0.150px; }
.tight-c { letter-spacing: -1.500px; }
.pm {
  font-family: "DejaVu Sans", sans-serif;
  font-size: 8px;
  color: #888;
  margin-left: 6px;
  line-height: 0;
  font-style: normal;
}
.top-pm { display: block; margin: 24px 0 0 21px; line-height: 10px; }
.mol-svg { display: block; }
.atom { font-family: "Liberation Sans", sans-serif; font-size: 27px; fill: #000; }
.water { font-family: "Liberation Sans", sans-serif; font-size: 27px; fill: #000; }
.svg-pm { font-family: "DejaVu Sans", sans-serif; font-size: 8px; fill: #888; }
.end {
  width: 20px;
  padding: 21px 0 0 8px;
  font-family: "DejaVu Sans", sans-serif;
  font-size: 8px;
  line-height: 12px;
  color: #888;
}
.first-end { padding-top: 23px; }

/* scrollbar */
.vscroll {
  width: 12px;
  flex: none;
  background: #dcdcdc;
  display: flex;
  flex-direction: column;
  padding: 3px 1px 2px 0;
}
.vs-btn {
  height: 10px;
  background: #fff;
  border: 1px solid #bbb;
  font-size: 7px;
  line-height: 8px;
  text-align: center;
  color: #666;
}
.vs-thumb {
  height: 69px;
  margin-top: 172px;
  background: #fff;
  border: 1px solid #aaa;
}
.down { margin-top: auto; }

/* status bar */
.status {
  height: 17px;
  flex: none;
  background: #f0f0f0;
  border-top: 1px solid #c6c6c6;
  display: flex;
  align-items: center;
  font-size: 9.500px;
  color: #555;
  padding: 0 0 1px 5px;
}
.st-words { margin-left: 14px; }
.st-ic1 { margin-left: 15px; }
.st-lang { margin-left: 10px; }
.st-ic2 { margin-left: 15px; }
.st-right { margin-left: auto; display: flex; align-items: center; height: 100%; padding-right: 7px; }
.st-right > svg:first-child { margin-right: 12px; }
.view-on { width: 28px; height: 100%; background: #c6c6c6; display: flex; align-items: center; justify-content: center; margin-right: 7px; }
.zoom-m { margin-left: 9px; font-family: "Liberation Sans", sans-serif; font-size: 11px; }
.zoom-p { font-family: "Liberation Sans", sans-serif; font-size: 13px; margin-right: 8px; }
.slider { width: 75px; height: 1px; background: #aaa; margin: 0 3px; position: relative; }
.slider i { position: absolute; left: 37px; top: -2px; width: 1px; height: 5px; background: #aaa; }
.slider b { position: absolute; left: 52px; top: -4px; width: 3px; height: 9px; background: #666; }
.zoom-v { width: 26px; font-size: 10px; white-space: nowrap; }

/* taskbar */
.taskbar {
  height: 30px;
  flex: none;
  background: #1e2124;
  display: flex;
  align-items: stretch;
}
.t-apps { display: flex; }
.t-app {
  width: 36.700px;
  display: flex;
  align-items: center;
  justify-content: center;
  position: relative;
}
.t-app.on::after {
  content: '';
  position: absolute;
  bottom: 0;
  left: 3.500px;
  right: 3.500px;
  height: 2px;
  background: #7fc9cf;
}
.word-app { background: #44474a; }
.t-app.word-app::after { left: 0; right: 0; }
.cd { font-family: "Liberation Sans", sans-serif; font-size: 7px; font-weight: 700; fill: #d8e8c8; text-anchor: middle; }
.w { font-family: "Liberation Sans", sans-serif; font-size: 8px; font-weight: 700; fill: #fff; text-anchor: middle; }
.tray { margin-left: auto; display: flex; align-items: center; color: #eee; padding-right: 15px; }
.tr { width: 18.300px; display: flex; justify-content: center; align-items: center; flex: none; }
.ime { font-size: 12px; color: #fff; }
.clock {
  width: 50px;
  display: flex;
  flex-direction: column;
  align-items: center;
  font-size: 9.500px;
  line-height: 13px;
  color: #ddd;
}
.notify { position: relative; margin-left: 8px; width: 20px; height: 22px; padding-top: 3px; }
.notify b {
  position: absolute;
  left: 7px;
  top: 9px;
  width: 12px;
  height: 12px;
  border-radius: 50%;
  background: #1e2124;
  border: 1px solid #ddd;
  font-size: 8px;
  line-height: 10px;
  text-align: center;
  color: #fff;
  font-family: "Liberation Sans", sans-serif;
}
</style>
